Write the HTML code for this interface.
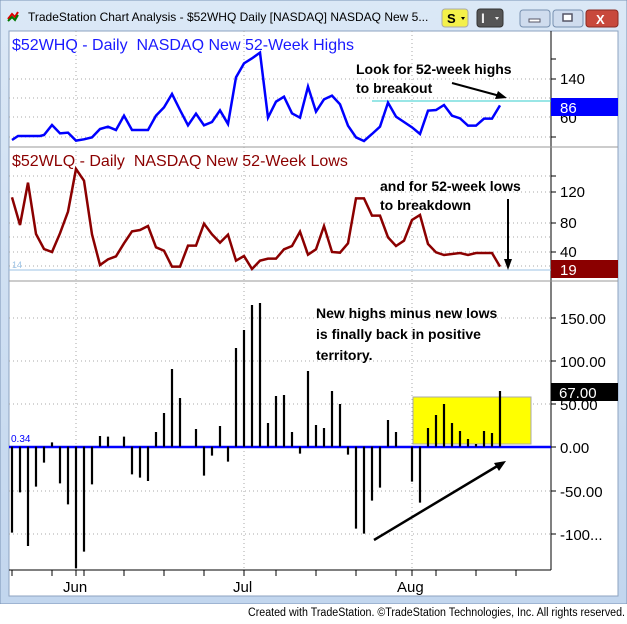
<!DOCTYPE html><html><head><style>body{margin:0;width:627px;height:619px;overflow:hidden;background:#fff;font-family:"Liberation Sans",sans-serif}</style></head><body>
<svg width="627" height="619" xmlns="http://www.w3.org/2000/svg" font-family="Liberation Sans, sans-serif">
<defs><linearGradient id="fr" x1="0" y1="0" x2="0" y2="1"><stop offset="0" stop-color="#dbe8f6"/><stop offset="1" stop-color="#c2d6ee"/></linearGradient></defs>
<rect x="0" y="0" width="627" height="604" fill="url(#fr)"/>
<rect x="0" y="0" width="627" height="604" fill="none" stroke="#7a93b5"/>
<rect x="9" y="31" width="609" height="565" fill="#fff" stroke="#8da3c0"/>
<g transform="translate(8,11)"><path d="M0 8 L4 3 L7 6 L10 1" stroke="#d00" stroke-width="2" fill="none"/><path d="M0 10 L4 6 L7 9 L10 4" stroke="#070" stroke-width="2" fill="none"/></g>
<text x="28" y="21" font-size="12" fill="#000">TradeStation Chart Analysis - $52WHQ Daily [NASDAQ] NASDAQ New 5...</text>
<rect x="442" y="9" width="26" height="18" rx="3" fill="#f4f04a" stroke="#aaa"/><text x="447" y="23" font-size="13" font-weight="bold">S</text><path d="M461 17 l4 0 l-2 3z"/>
<rect x="477" y="9" width="26" height="18" rx="3" fill="#555" stroke="#333"/><text x="481" y="23" font-size="14" font-weight="bold" fill="#eee">I</text><path d="M495 17 l4 0 l-2 3z" fill="#eee"/>
<rect x="520" y="10" width="30" height="17" rx="3" fill="#cfdcee" stroke="#7790b0"/><rect x="529" y="19" width="11" height="3" fill="#fff" stroke="#556"/>
<rect x="553" y="10" width="30" height="17" rx="3" fill="#cfdcee" stroke="#7790b0"/><rect x="563" y="14" width="9" height="7" fill="#fff" stroke="#556" stroke-width="1.5"/>
<rect x="586" y="10" width="32" height="17" rx="3" fill="#c8493c" stroke="#8a2a22"/><text x="596" y="24" font-size="13" font-weight="bold" fill="#fff">X</text>
<line x1="551" y1="31" x2="551" y2="570" stroke="#000"/>
<line x1="9" y1="147" x2="618" y2="147" stroke="#999"/>
<line x1="9" y1="281" x2="618" y2="281" stroke="#999"/>
<line x1="9" y1="570" x2="551" y2="570" stroke="#000"/>
<g stroke="#aaa" stroke-dasharray="1,3">
<line x1="76" y1="31" x2="76" y2="570"/><line x1="244" y1="31" x2="244" y2="570"/><line x1="412" y1="31" x2="412" y2="570"/>
<line x1="9" y1="79" x2="551" y2="79"/><line x1="9" y1="98" x2="551" y2="98"/><line x1="9" y1="117" x2="551" y2="117"/><line x1="9" y1="137" x2="551" y2="137"/>
<line x1="9" y1="176" x2="551" y2="176"/><line x1="9" y1="192" x2="551" y2="192"/><line x1="9" y1="223" x2="551" y2="223"/><line x1="9" y1="237" x2="551" y2="237"/><line x1="9" y1="252" x2="551" y2="252"/><line x1="9" y1="266" x2="551" y2="266"/>
<line x1="9" y1="318" x2="551" y2="318"/><line x1="9" y1="361" x2="551" y2="361"/><line x1="9" y1="404" x2="551" y2="404"/><line x1="9" y1="491" x2="551" y2="491"/><line x1="9" y1="534" x2="551" y2="534"/>
</g>
<g stroke="#000"><line x1="551" y1="59" x2="556" y2="59"/><line x1="551" y1="79" x2="556" y2="79"/><line x1="551" y1="137" x2="556" y2="137"/><line x1="551" y1="176" x2="556" y2="176"/><line x1="551" y1="192" x2="556" y2="192"/><line x1="551" y1="223" x2="556" y2="223"/><line x1="551" y1="252" x2="556" y2="252"/><line x1="551" y1="318" x2="556" y2="318"/><line x1="551" y1="361" x2="556" y2="361"/><line x1="551" y1="404" x2="556" y2="404"/><line x1="551" y1="447" x2="556" y2="447"/><line x1="551" y1="491" x2="556" y2="491"/><line x1="551" y1="534" x2="556" y2="534"/>
<path d="M12 570v6M52 570v6M76 570v6M84 570v6M124 570v6M164 570v6M204 570v6M244 570v6M276 570v6M316 570v6M356 570v6M396 570v6M412 570v6M436 570v6M476 570v6M516 570v6"/></g>
<text x="12" y="50" font-size="16" fill="#1a1aff" xml:space="preserve">$52WHQ - Daily  NASDAQ New 52-Week Highs</text>
<line x1="372" y1="101" x2="551" y2="101" stroke="#3cc"/>
<g transform="scale(0.4,0.33333)"><polyline fill="none" stroke="#0000ff" stroke-width="2.5" vector-effect="non-scaling-stroke" points="30,420 45,408 60,408 100,408 110,405 130,375 150,400 170,398 190,422 210,418 230,412 250,387 270,380 290,390 310,347 330,390 370,390 390,347 410,322 430,282 450,330 470,376 490,341 510,376 530,366 550,331 570,372 590,232 610,190 630,175 650,158 670,353 690,305 710,290 730,340 750,353 770,260 790,335 810,298 830,287 850,313 870,377 890,412 910,423 930,402 950,380 970,308 990,350 1010,366 1030,382 1050,402 1070,332 1090,330 1110,315 1130,347 1150,355 1170,377 1190,377 1210,356 1230,356 1250,316"/></g>
<text x="560" y="84" font-size="15">140</text><text x="560" y="123" font-size="15">60</text>
<rect x="551" y="98" width="67" height="18" fill="#0000ff"/><text x="560" y="113" font-size="15" fill="#fff">86</text>
<text x="356" y="74" font-size="14" font-weight="bold">Look for 52-week highs</text><text x="356" y="93" font-size="14" font-weight="bold">to breakout</text>
<line x1="452" y1="83" x2="500" y2="96" stroke="#000" stroke-width="2"/><path d="M507 98 L495 99 L498 91z"/>
<text x="12" y="166" font-size="16" fill="#8b0000" xml:space="preserve">$52WLQ - Daily  NASDAQ New 52-Week Lows</text>
<line x1="9" y1="270" x2="551" y2="270" stroke="#9cc3e6"/>
<text x="12" y="268" font-size="9" fill="#9cc3e6">14</text>
<g transform="translate(0,150) scale(0.4,0.33333)"><polyline fill="none" stroke="#8b0000" stroke-width="2.5" vector-effect="non-scaling-stroke" points="30,142 50,225 70,98 90,252 110,297 130,306 150,250 170,185 190,57 210,92 230,253 250,345 270,328 290,319 310,280 330,244 350,240 370,228 390,292 410,302 430,350 450,350 470,287 490,287 510,221 530,253 550,278 570,254 590,332 610,318 630,357 650,332 670,326 690,326 710,298 730,288 750,245 770,314 790,298 810,228 830,306 850,308 870,280 890,145 910,145 930,197 950,197 970,262 990,288 1010,272 1030,210 1050,195 1070,282 1090,307 1110,315 1150,309 1170,315 1190,309 1230,309 1250,350"/></g>
<text x="560" y="197" font-size="15">120</text><text x="560" y="228" font-size="15">80</text><text x="560" y="257" font-size="15">40</text>
<rect x="551" y="260" width="67" height="18" fill="#8b0000"/><text x="560" y="275" font-size="15" fill="#fff">19</text>
<text x="380" y="191" font-size="14" font-weight="bold">and for 52-week lows</text><text x="380" y="210" font-size="14" font-weight="bold">to breakdown</text>
<line x1="508" y1="199" x2="508" y2="262" stroke="#000" stroke-width="2"/><path d="M508 270 L504 259 L512 259z"/>
<rect x="413" y="397" width="118" height="47" fill="#ffff00" stroke="#aaa"/>
<line x1="9" y1="447" x2="551" y2="447" stroke="#0000ff" stroke-width="2.5"/>
<text x="11" y="442" font-size="10" fill="#0000ff">0.34</text>
<g transform="translate(0,290) scale(0.4,0.33333)"><path fill="none" stroke="#000" stroke-width="2.2" vector-effect="non-scaling-stroke" d="M30 470V728M50 470V607M70 470V768M90 470V590M110 470V518M130 470V457M150 470V580M170 470V643M190 470V835M210 470V785M230 470V583M250 470V438M270 470V440M310 470V440M330 470V553M350 470V563M370 470V573M390 470V426M410 470V369M430 470V237M450 470V324M490 470V417M510 470V557M530 470V497M550 470V408M570 470V515M590 470V174M610 470V120M630 470V45M650 470V39M670 470V399M690 470V318M710 470V315M730 470V426M750 470V491M770 470V243M790 470V405M810 470V414M830 470V303M850 470V342M870 470V494M890 470V716M910 470V731M930 470V632M950 470V593M970 470V390M990 470V426M1030 470V575M1050 470V638M1070 470V414M1090 470V375M1110 470V342M1130 470V399M1150 470V423M1170 470V447M1190 470V462M1210 470V423M1230 470V429M1250 470V303"/></g>
<text x="560" y="324" font-size="15">150.00</text><text x="560" y="367" font-size="15">100.00</text><text x="560" y="410" font-size="15">50.00</text><text x="560" y="453" font-size="15">0.00</text><text x="560" y="497" font-size="15">-50.00</text><text x="560" y="540" font-size="15">-100...</text>
<rect x="551" y="383" width="67" height="18" fill="#000"/><text x="559" y="398" font-size="15" fill="#fff">67.00</text>
<text x="316" y="318" font-size="14" font-weight="bold">New highs minus new lows</text><text x="316" y="339" font-size="14" font-weight="bold">is finally back in positive</text><text x="316" y="360" font-size="14" font-weight="bold">territory.</text>
<line x1="374" y1="540" x2="499" y2="465" stroke="#000" stroke-width="2.5"/><path d="M506 461 L494 463 L499 471z"/>
<text x="63" y="592" font-size="15">Jun</text><text x="233" y="592" font-size="15">Jul</text><text x="397" y="592" font-size="15">Aug</text>
<rect x="0" y="604" width="627" height="15" fill="#fff"/>
<text x="625" y="616" font-size="11.5" text-anchor="end" textLength="377" lengthAdjust="spacingAndGlyphs">Created with TradeStation. ©TradeStation Technologies, Inc. All rights reserved.</text>
</svg></body></html>
